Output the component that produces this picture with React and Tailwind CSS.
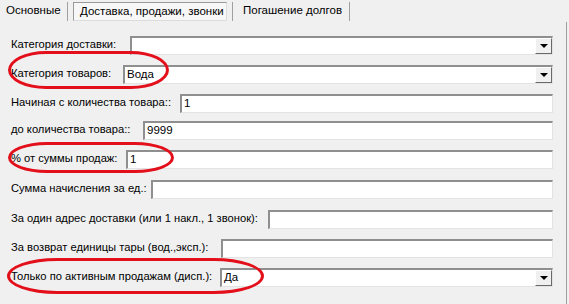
import React from 'react';

const font = { fontFamily: '"Liberation Sans", Arial, sans-serif' };

const Field = ({ value, combo }) => (
  <div className="flex-1 h-[19px] flex items-center bg-white border-t-2 border-l-2 border-t-[#8f8f8f] border-l-[#8f8f8f] border-b border-r border-b-[#e3e3e3] border-r-[#e3e3e3] relative">
    <span className="pl-[2px] text-[11.5px] text-black leading-none">{value}</span>
    {combo && (
      <div className="absolute right-[0px] top-[0px] w-[17px] h-[16px] bg-[#f0f0f0] border border-t-white border-l-white border-b-[#696969] border-r-[#696969] flex items-center justify-center">
        <div className="w-0 h-0 border-l-[4px] border-r-[4px] border-t-[4px] border-l-transparent border-r-transparent border-t-black" />
      </div>
    )}
  </div>
);

const Row = ({ label, w, mt, value, combo }) => (
  <div className={`flex items-center h-[19px] ${mt}`}>
    <div className={`${w} shrink-0 whitespace-nowrap text-[11.2px] text-black leading-none -mt-[2px]`}>{label}</div>
    <Field value={value} combo={combo} />
  </div>
);

export default function App() {
  return (
    <div className="w-[569px] h-[304px] bg-[#f0f0f0] relative overflow-hidden" style={font}>
      {/* tabs */}
      <div className="flex items-center h-[22px] text-[11.5px] text-black whitespace-nowrap">
        <div className="pl-[6px] w-[67px] shrink-0">Основные</div>
        <div className="w-px h-[19px] bg-[#a0a0a0] shrink-0" />
        <div className="ml-[5px] h-[19px] mt-[1px] px-[6px] shrink-0 flex items-center bg-[#f7f7f7] border border-t-[#9a9a9a] border-l-[#9a9a9a] border-b-[#dcdcdc] border-r-[#dcdcdc] w-[154px]">
          Доставка, продажи, звонки
        </div>
        <div className="ml-[5px] w-px h-[19px] bg-[#a0a0a0] shrink-0" />
        <div className="pl-[10px] w-[116px] shrink-0">Погашение долгов</div>
        <div className="w-px h-[19px] bg-[#a0a0a0] shrink-0" />
      </div>

      {/* panel */}
      <div className="w-[567px] h-[282px] border-r border-r-[#a0a0a0] pl-[11px] pr-[13px] pt-[14px]">
        <Row label="Категория доставки:" w="w-[119px]" mt="" value="" combo />
        <Row label="Категория товаров:" w="w-[112px]" mt="mt-[10px]" value="Вода" combo />
        <Row label="Начиная с количества товара::" w="w-[169px]" mt="mt-[10px]" value="1" />
        <Row label="до количества товара::" w="w-[132px]" mt="mt-[8px]" value="9999" />
        <Row label="% от суммы продаж:" w="w-[115px]" mt="mt-[10px]" value="1" />
        <Row label="Сумма начисления за ед.:" w="w-[140px]" mt="mt-[11px]" value="" />
        <Row label="За один адрес доставки (или 1 накл., 1 звонок):" w="w-[257px]" mt="mt-[11px]" value="" />
        <Row label="За возврат единицы тары (вод.,эксп.):" w="w-[210px]" mt="mt-[10px]" value="" />
        <Row label="Только по активным продажам (дисп.):" w="w-[209px]" mt="mt-[10px]" value="Да" combo />
      </div>

      {/* red annotation ellipses */}
      <div className="absolute left-[8px] top-[51px] w-[161px] h-[38px] border-[3px] border-[#e3101c] rounded-[40px/20px]" />
      <div className="absolute left-[8px] top-[142px] w-[166px] h-[31px] border-[3px] border-[#e3101c] rounded-[40px/16px]" />
      <div className="absolute left-[7px] top-[258px] w-[257px] h-[36px] border-[3px] border-[#e3101c] rounded-[50px/18px]" />
    </div>
  );
}
